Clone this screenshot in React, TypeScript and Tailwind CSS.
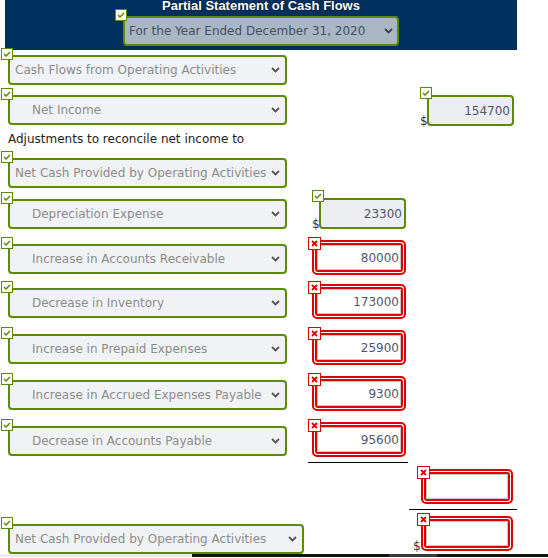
import React from 'react';

const FONT = "font-['DejaVu_Sans',sans-serif]";

function Chevron({ color = '#555' }: { color?: string }) {
  return (
    <svg width="9" height="6" viewBox="0 0 9 6" className="shrink-0">
      <path d="M1 1 L4.5 4.5 L8 1" stroke={color} strokeWidth="1.8" fill="none" />
    </svg>
  );
}

function CheckBadge({ className }: { className: string }) {
  return (
    <span className={`absolute z-10 flex h-[12px] w-[12px] items-center justify-center border border-[#5d8a05] bg-white ${className}`}>
      <svg width="8" height="6" viewBox="0 0 8 6">
        <path d="M1 3 L3 5 L7 1" stroke="#5d8a05" strokeWidth="1.5" fill="none" />
      </svg>
    </span>
  );
}

function CrossBadge({ className }: { className: string }) {
  return (
    <span className={`absolute z-10 flex h-[13px] w-[13px] items-center justify-center border border-[#e00000] bg-white ${className}`}>
      <svg width="7" height="7" viewBox="0 0 7 7">
        <path d="M1 1 L6 6 M6 1 L1 6" stroke="#e00000" strokeWidth="1.8" fill="none" />
      </svg>
    </span>
  );
}

interface SelectProps {
  label: string;
  indent?: boolean;
  className?: string;
}

function Select({ label, indent, className = 'w-[279px]' }: SelectProps) {
  return (
    <div
      className={`relative ml-[8px] flex h-[30px] shrink-0 items-center justify-between gap-[2px] rounded-[4px] border-2 border-[#5d8a05] bg-[#f1f2f4] pr-[5px] text-[12px] text-[#8c8c8c] ${indent ? 'pl-[22px]' : 'pl-[5px]'} ${className}`}
    >
      <CheckBadge className="left-[-9px] top-[-9px]" />
      <span className="whitespace-nowrap overflow-hidden">{label}</span>
      <Chevron />
    </div>
  );
}

function GreenInput({ value, className }: { value: string; className: string }) {
  return (
    <div
      className={`relative flex h-[31px] w-[87px] shrink-0 items-center justify-end rounded-[4px] border-2 border-[#5d8a05] bg-[#eceef1] pr-[2px] text-[12px] text-[#50566a] ${className}`}
    >
      <CheckBadge className="left-[-9px] top-[-10px]" />
      <span className="absolute bottom-[-3px] left-[-9px] text-[12px] leading-none text-[#333]">$</span>
      {value}
    </div>
  );
}

function RedInput({ value, className, dollar }: { value?: string; className: string; dollar?: boolean }) {
  return (
    <div className={`relative h-[35px] shrink-0 rounded-[5px] border-2 border-[#e00000] bg-white p-[1px] ${className}`}>
      <CrossBadge className="left-[-6px] top-[-5px]" />
      {dollar && (
        <span className="absolute bottom-[-3px] left-[-10px] text-[12px] leading-none text-[#333]">$</span>
      )}
      <div className="h-full w-full rounded-[3px] border-2 border-[#e00000]">
        <div className="flex h-full w-full items-center justify-end border border-[#c8c8c8] bg-white pr-[1px] text-[12px] text-[#50566a]">
          {value}
        </div>
      </div>
    </div>
  );
}

const adjustments = [
  { label: 'Increase in Accounts Receivable', value: '80000', mt: 'mt-[11px]' },
  { label: 'Decrease in Inventory', value: '173000', mt: 'mt-[9px]' },
  { label: 'Increase in Prepaid Expenses', value: '25900', mt: 'mt-[11px]' },
  { label: 'Increase in Accrued Expenses Payable', value: '9300', mt: 'mt-[11px]' },
  { label: 'Decrease in Accounts Payable', value: '95600', mt: 'mt-[11px]' },
];

export default function App() {
  return (
    <div className={`relative h-[558px] w-[548px] overflow-hidden bg-white ${FONT}`}>
      {/* header */}
      <div className="ml-[5px] flex h-[50px] w-[512px] flex-col items-center bg-[#00305e]">
        <div className="-mt-[1px] h-[14px] font-['Liberation_Sans',sans-serif] text-[13px] font-bold leading-[14px] text-white [text-shadow:0_0_1px_#000]">
          Partial Statement of Cash Flows
        </div>
        <div className="relative mt-[3px] flex h-[30px] w-[276px] items-center justify-between rounded-[4px] border-2 border-[#5d8a05] bg-[#a8b6c6] pl-[4px] pr-[4px] text-[12px] text-[#46505e]">
          <CheckBadge className="left-[-10px] top-[-9px]" />
          <span className="whitespace-nowrap">For the Year Ended December 31, 2020</span>
          <Chevron color="#3a4250" />
        </div>
      </div>

      <div className="mt-[5px] flex">
        <Select label="Cash Flows from Operating Activities" />
      </div>

      <div className="mt-[10px] flex items-start">
        <Select label="Net Income" indent />
        <GreenInput value="154700" className="ml-[140px] w-[86px]" />
      </div>

      <div className="mt-[6px] h-[14px] pl-[8px] text-[12px] leading-[14px] text-[#222]">
        Adjustments to reconcile net income to
      </div>

      <div className="mt-[12px] flex">
        <Select label="Net Cash Provided by Operating Activities" />
      </div>

      <div className="mt-[10px] flex items-start">
        <div className="mt-[1px]">
          <Select label="Depreciation Expense" indent />
        </div>
        <GreenInput value="23300" className="ml-[32px]" />
      </div>

      {adjustments.map((a) => (
        <div key={a.label} className={`flex items-start ${a.mt}`}>
          <div className="mt-[4px]">
            <Select label={a.label} indent />
          </div>
          <RedInput value={a.value} className="ml-[25px] w-[94px]" />
        </div>
      ))}

      <div className="ml-[308px] mt-[5px] h-[1px] w-[100px] bg-black" />

      <div className="mt-[6px] flex">
        <RedInput className="ml-[421px] w-[92px]" />
      </div>

      <div className="ml-[409px] mt-[5px] h-[1px] w-[108px] bg-black" />

      <div className="mt-[6px] flex h-[38px] items-start">
        <div className="mt-[8px]">
          <Select label="Net Cash Provided by Operating Activities" className="w-[296px]" />
        </div>
        <RedInput className="ml-[117px] w-[92px]" dollar />
      </div>

      <div className="flex h-[3px]">
        <div className="w-[192px] bg-[#ececec]" />
        <div className="w-[197px] bg-[#101510]" />
        <div className="w-[48px] bg-[#3a3a3a]" />
        <div className="flex-1 bg-[#101510]" />
      </div>
    </div>
  );
}
